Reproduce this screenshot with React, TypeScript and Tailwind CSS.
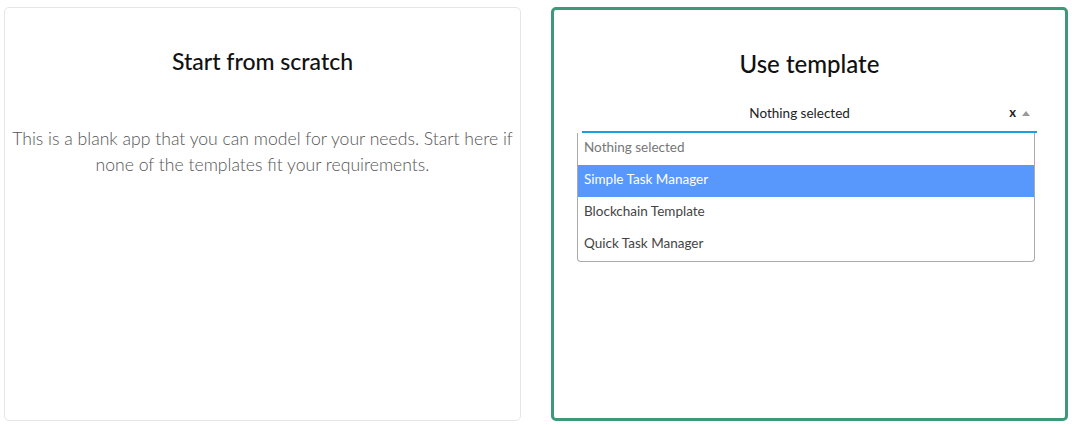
export default function App() {
  const font = { fontFamily: "Lato, 'Noto Sans', sans-serif" };
  return (
    <div className="w-[1072px] h-[425px] bg-white px-1 pt-[7px]" style={font}>
      <div className="grid grid-cols-2 gap-[30px] h-[414px]">
        <div className="border border-[#e6e6e6] rounded-[5px] flex flex-col items-center px-[5px]">
          <h2 className="mt-[37px] text-[23px] leading-[32px] font-medium text-[#111]">Start from scratch</h2>
          <p className="mt-[49px] text-center text-[17.6px] leading-[26px] font-light text-[#555]">
            This is a blank app that you can model for your needs. Start here if none of the templates fit your requirements.
          </p>
        </div>
        <div className="border-[3px] border-[#3f9979] rounded-[5px] flex flex-col items-center">
          <h2 className="mt-[38px] text-[24px] leading-[32px] font-medium text-[#111]">Use template</h2>
          <div className="self-stretch mt-[19px] pl-[23px] pr-[30px]">
            <div className="ml-[5px] mr-[-2px] h-[34px] flex items-center pb-[4px] border-b-2 border-[#1a9fde]">
              <div className="flex-1 text-center text-[13.5px] text-[#222] pl-[8px]">Nothing selected</div>
              <span className="text-[13px] font-bold text-[#222] leading-none mr-[6px] mb-[2px]">x</span>
              <span className="w-0 h-0 border-l-[4px] border-r-[4px] border-b-[5px] border-l-transparent border-r-transparent border-b-[#999] mr-[7px]" />
            </div>
            <div className="border border-t-0 border-[#aaa] rounded-b-[4px] text-[13.5px] text-[#444]">
              <div className="h-[32px] flex items-center px-[6px] pb-[3px] text-[#777]">Nothing selected</div>
              <div className="h-[32px] flex items-center px-[6px] pb-[3px] bg-[#5897fb] text-white">Simple Task Manager</div>
              <div className="h-[32px] flex items-center px-[6px] pb-[3px]">Blockchain Template</div>
              <div className="h-[32px] flex items-center px-[6px] pb-[3px]">Quick Task Manager</div>
            </div>
          </div>
        </div>
      </div>
    </div>
  );
}
